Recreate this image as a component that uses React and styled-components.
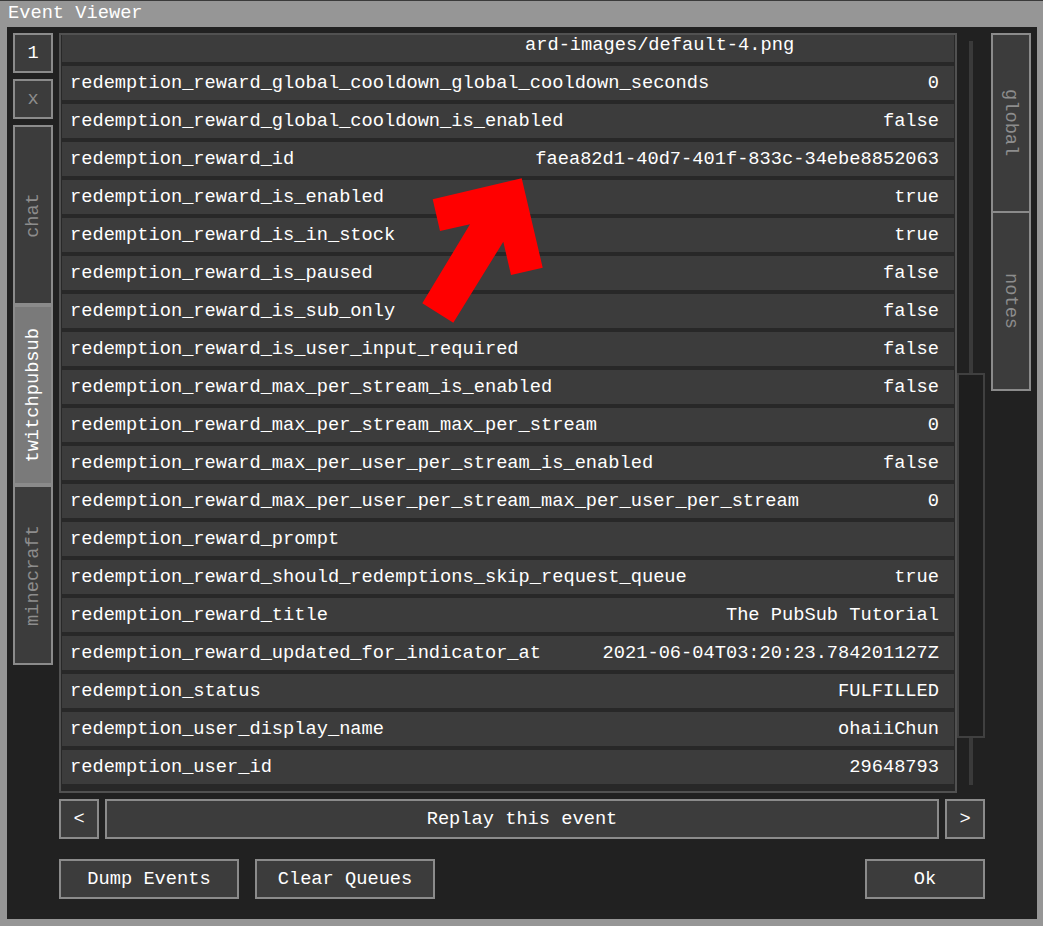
import React from "react";
import styled, { createGlobalStyle } from "styled-components";

const GlobalStyle = createGlobalStyle`
  body {
    margin: 0;
    background: #3a3a3a;
    font-family: "Liberation Mono", "DejaVu Sans Mono", monospace;
    font-size: 18.7px;
  }
  * { box-sizing: border-box; }
`

const Page = styled.div`
  position: relative;
  width: 1043px;
  height: 926px;
  padding-top: 1px;
`
const Window = styled.div`
  height: 925px;
  background: #969696;
  padding: 0 6px 7px 7px;
  display: flex;
  flex-direction: column;
`
const TitleBar = styled.div`
  height: 26px;
  line-height: 24px;
  padding-left: 1px;
  color: #fff;
`
const Body = styled.div`
  flex: 1;
  background: #212121;
  padding: 6px 6px 20px;
  display: flex;
  flex-direction: column;
`
const Main = styled.div`
  display: flex;
  height: 760px;
  gap: 6px;
`
const SideColumn = styled.div`
  width: 40px;
  display: flex;
  flex-direction: column;
  gap: 6px;
`
const TabStack = styled.div`
  display: flex;
  flex-direction: column;
`
const SquareButton = styled.div`
  width: 40px;
  height: 40px;
  flex-shrink: 0;
  border: 2px solid #8b8b8b;
  background: #3c3c3c;
  color: ${(p) => (p.$disabled ? "#8d8d8d" : "#fff")};
  display: flex;
  align-items: center;
  justify-content: center;
`
const Tab = styled.div`
  width: 40px;
  height: 180px;
  flex-shrink: 0;
  border: 2px solid #8b8b8b;
  background: ${(p) => (p.$active ? "#7a7a7a" : "#3c3c3c")};
  color: ${(p) => (p.$active ? "#fff" : "#8d8d8d")};
  display: flex;
  align-items: center;
  justify-content: center;
  margin-top: ${(p) => (p.$shared ? "-2px" : "0")};
  &:first-child {
    margin-top: 0;
  }
`
const TabLabel = styled.span`
  writing-mode: vertical-rl;
  transform: ${(p) => (p.$up ? "rotate(180deg)" : "none")};
  white-space: nowrap;
`
const ListPanel = styled.div`
  width: 898px;
  border: 2px solid #515151;
  background: #282828;
  padding: 0 1px;
  overflow: hidden;
`
const Rows = styled.div`
  margin-top: -7px;
  display: flex;
  flex-direction: column;
  gap: 4px;
`
const Row = styled.div`
  height: 34px;
  flex-shrink: 0;
  background: #3c3c3c;
  color: #fff;
  display: flex;
  align-items: center;
  justify-content: space-between;
  padding: 0 15px 0 8px;
  white-space: nowrap;
`
const Continued = styled(Row)`
  justify-content: flex-start;
  padding-left: 463px;
`
const Scrollbar = styled.div`
  width: 28px;
  margin-left: -6px;
  position: relative;
  display: flex;
  justify-content: center;
  padding: 8px 0;
`
const Track = styled.div`
  width: 4px;
  background: #3a3a3a;
`
const Thumb = styled.div`
  position: absolute;
  left: 0;
  right: 0;
  top: 340px;
  height: 365px;
  border: 2px solid #404040;
  background: #1e1e1e;
`
const NavRow = styled.div`
  display: flex;
  gap: 6px;
  height: 40px;
  margin: 6px 46px 0;
`
const Button = styled.div`
  width: ${(p) => p.$w || "auto"};
  flex: ${(p) => (p.$grow ? 1 : "none")};
  height: 40px;
  border: 2px solid #8b8b8b;
  background: #3c3c3c;
  color: #fff;
  display: flex;
  align-items: center;
  justify-content: center;
  white-space: nowrap;
  margin-left: ${(p) => (p.$push ? "auto" : "0")};
`
const Footer = styled.div`
  display: flex;
  gap: 16px;
  height: 40px;
  margin: 20px 46px 0;
`
const Arrow = styled.svg`
  position: absolute;
  left: 0;
  top: 0;
  pointer-events: none;
`

const rows = [
  ["redemption_reward_global_cooldown_global_cooldown_seconds", "0"],
  ["redemption_reward_global_cooldown_is_enabled", "false"],
  ["redemption_reward_id", "faea82d1-40d7-401f-833c-34ebe8852063"],
  ["redemption_reward_is_enabled", "true"],
  ["redemption_reward_is_in_stock", "true"],
  ["redemption_reward_is_paused", "false"],
  ["redemption_reward_is_sub_only", "false"],
  ["redemption_reward_is_user_input_required", "false"],
  ["redemption_reward_max_per_stream_is_enabled", "false"],
  ["redemption_reward_max_per_stream_max_per_stream", "0"],
  ["redemption_reward_max_per_user_per_stream_is_enabled", "false"],
  ["redemption_reward_max_per_user_per_stream_max_per_user_per_stream", "0"],
  ["redemption_reward_prompt", ""],
  ["redemption_reward_should_redemptions_skip_request_queue", "true"],
  ["redemption_reward_title", "The PubSub Tutorial"],
  ["redemption_reward_updated_for_indicator_at", "2021-06-04T03:20:23.784201127Z"],
  ["redemption_status", "FULFILLED"],
  ["redemption_user_display_name", "ohaiiChun"],
  ["redemption_user_id", "29648793"],
];

const App = () => {
  return (
    <>
      <GlobalStyle />
      <Page>
        <Window>
          <TitleBar>Event Viewer</TitleBar>
          <Body>
            <Main>
              <SideColumn>
                <SquareButton>1</SquareButton>
                <SquareButton $disabled>x</SquareButton>
                <TabStack>
                  <Tab><TabLabel $up>chat</TabLabel></Tab>
                  <Tab $active><TabLabel $up>twitchpubsub</TabLabel></Tab>
                  <Tab><TabLabel $up>minecraft</TabLabel></Tab>
                </TabStack>
              </SideColumn>
              <ListPanel>
                <Rows>
                  <Continued>ard-images/default-4.png</Continued>
                  {rows.map(([key, value]) => (
                    <Row key={key}>
                      <span>{key}</span>
                      <span>{value}</span>
                    </Row>
                  ))}
                </Rows>
              </ListPanel>
              <Scrollbar>
                <Track />
                <Thumb />
              </Scrollbar>
              <SideColumn>
                <TabStack>
                  <Tab $shared><TabLabel>global</TabLabel></Tab>
                  <Tab $shared><TabLabel>notes</TabLabel></Tab>
                </TabStack>
              </SideColumn>
            </Main>
            <NavRow>
              <Button $w="40px">&lt;</Button>
              <Button $grow>Replay this event</Button>
              <Button $w="40px">&gt;</Button>
            </NavRow>
            <Footer>
              <Button $w="180px">Dump Events</Button>
              <Button $w="180px">Clear Queues</Button>
              <Button $w="120px" $push>Ok</Button>
            </Footer>
          </Body>
        </Window>
        <Arrow width="1043" height="926" viewBox="0 0 1043 926">
          <polygon
            fill="#ff0000"
            points="432.7,199.3 521.7,178.3 542.7,267.7 511,275 503.3,241.7 453.3,322.7 422.3,303.3 470,224.3 440,231"
          />
        </Arrow>
      </Page>
    </>
  );
};

export default App;
